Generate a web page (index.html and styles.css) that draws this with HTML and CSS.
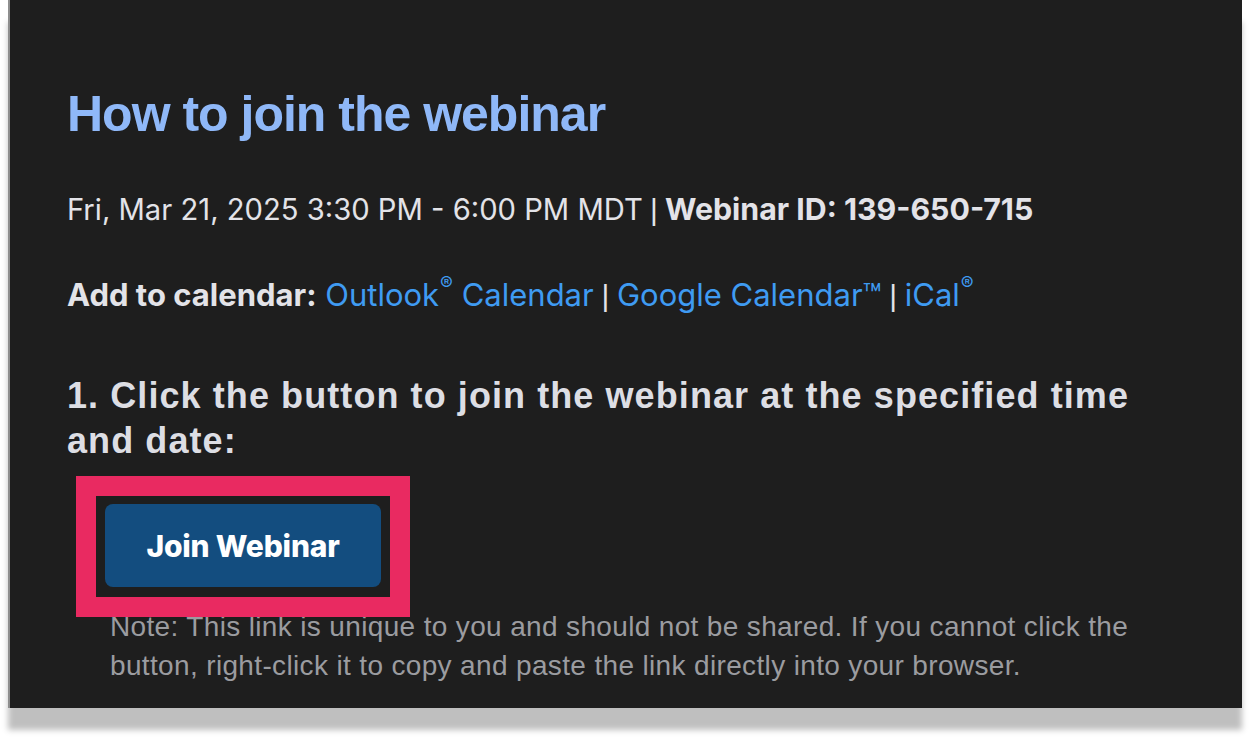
FILE: index.html
```html
<!DOCTYPE html>
<html lang="en">
<head>
<meta charset="utf-8">
<title>How to join the webinar</title>
<link rel="stylesheet" href="styles.css">
</head>
<body>
<div class="page">
  <div class="window">
    <h1 class="title">How to join the webinar</h1>
    <p class="line date">Fri, Mar 21, 2025 3:30 PM - 6:00 PM MDT <span class="pipe">|</span> <b>Webinar ID: 139-650-715</b></p>
    <p class="line cal"><b>Add to calendar:</b> <a class="link" href="#">Outlook<span class="reg">®</span> Calendar</a> <span class="pipe">|</span> <a class="link" href="#">Google Calendar™</a> <span class="pipe">|</span> <a class="link" href="#">iCal<span class="reg">®</span></a></p>
    <h2 class="step">1. Click the button to join the webinar at the specified time and date:</h2>
    <div class="btn-wrap">
      <a class="join" href="#">Join Webinar</a>
      <span class="highlight"></span>
    </div>
    <p class="note">Note: This link is unique to you and should not be shared. If you cannot click the button, right-click it to copy and paste the link directly into your browser.</p>
  </div>
</div>
</body>
</html>
```
FILE: styles.css
```css
html, body {
  margin: 0;
  padding: 0;
  background: #ffffff;
}

.page {
  min-height: 746px;
  padding: 0 10px 38px 8px;
  box-sizing: border-box;
}

.window {
  box-sizing: border-box;
  width: 1234px;
  height: 708px;
  background: #1e1e1e;
  border-left: 2px solid #8e8e8e;
  box-shadow: 0 22px 6px rgba(0, 0, 0, 0.25);
  padding: 84px 40px 0 57px;
  overflow: hidden;
}

.title {
  margin: 0;
  font-family: "Liberation Sans", Arial, sans-serif;
  font-weight: 700;
  font-size: 50px;
  line-height: 60px;
  letter-spacing: -1px;
  color: #8fb8f8;
}

.line {
  margin: 46px 0 0;
  height: 40px;
  font-family: Inter, "Noto Sans", sans-serif;
  font-size: 31px;
  line-height: 40px;
  color: #e3e3e8;
  white-space: nowrap;
}

.date {
  font-size: 29.2px;
}

.date b {
  font-size: 30.3px;
  line-height: 0;
}

.line b {
  font-weight: 700;
}

.pipe {
  font-family: "Liberation Sans", Arial, sans-serif;
  font-size: 30px;
  line-height: 0;
  margin: 0 -1px;
  color: #e3e3e8;
}

.cal {
  margin-top: 45px;
}

.link {
  color: #3f9bf2;
  text-decoration: none;
}

.reg {
  font-size: 0.62em;
  vertical-align: 0.85em;
  line-height: 0;
  margin-left: 1px;
}

.step {
  margin: 58px 0 0;
  font-family: "Liberation Sans", Arial, sans-serif;
  font-weight: 700;
  font-size: 36px;
  line-height: 45px;
  letter-spacing: 1.08px;
  color: #dddee4;
}

.btn-wrap {
  position: relative;
  margin: 41px 0 0 38px;
  width: 276px;
  height: 83px;
}

.join {
  display: flex;
  align-items: center;
  justify-content: center;
  width: 276px;
  height: 83px;
  border-radius: 8px;
  background: #134d7f;
  color: #ffffff;
  font-family: Inter, "Noto Sans", sans-serif;
  font-weight: 800;
  font-size: 30px;
  text-decoration: none;
  letter-spacing: -0.2px;
}

.highlight {
  position: absolute;
  left: -29px;
  top: -28px;
  width: 334px;
  height: 141px;
  box-sizing: border-box;
  border: 20px solid #e92a61;
  pointer-events: none;
  z-index: 2;
}

.note {
  margin: 20px 0 0 43px;
  font-family: "Liberation Sans", Arial, sans-serif;
  font-size: 28px;
  line-height: 39px;
  letter-spacing: 0.35px;
  color: #9b9ca0;
  max-width: 1060px;
}
```
